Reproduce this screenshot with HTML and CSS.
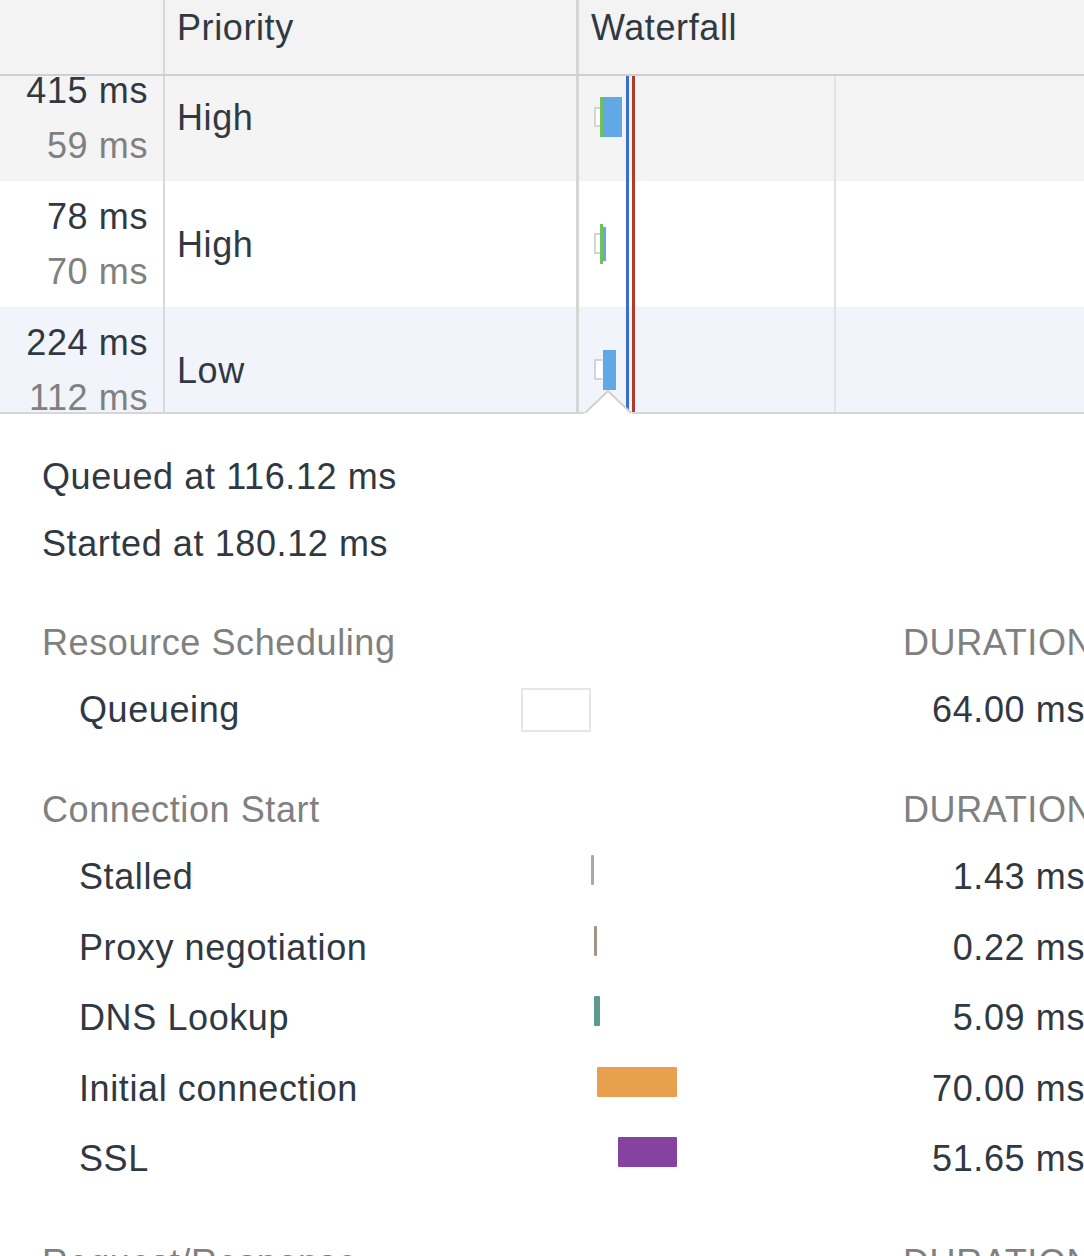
FILE: index.html
```html
<!DOCTYPE html>
<html>
<head>
<meta charset="utf-8">
<title>Network timing</title>
<link rel="stylesheet" href="styles.css">
</head>
<body>
<div class="page">
  <div class="head">
    <div class="col1"></div>
    <div class="col2">Priority</div>
    <div class="col3">Waterfall</div>
  </div>
  <div class="body">
    <div class="rows">
      <div class="row alt">
        <div class="col1"><span>415 ms</span><span class="sub">59 ms</span></div>
        <div class="col2">High</div>
        <div class="col3">
          <span class="wb wait" style="top:53px;height:20px"></span>
          <span class="wb green" style="top:43px;height:40px"></span>
          <span class="wb blue" style="top:43px;height:40px;width:19px"></span>
        </div>
      </div>
      <div class="row">
        <div class="col1"><span>78 ms</span><span class="sub">70 ms</span></div>
        <div class="col2">High</div>
        <div class="col3">
          <span class="wb wait" style="top:52px;height:21px"></span>
          <span class="wb green" style="top:43px;height:40px"></span>
          <span class="wb blue" style="top:46px;height:34px;width:3px"></span>
        </div>
      </div>
      <div class="row sel">
        <div class="col1"><span>224 ms</span><span class="sub">112 ms</span></div>
        <div class="col2">Low</div>
        <div class="col3">
          <span class="wb wait" style="top:52px;height:21px"></span>
          <span class="wb blue" style="top:43px;height:40px;width:13px"></span>
        </div>
      </div>
    </div>
    <span class="vline grid"></span>
    <span class="vline dcl"></span>
    <span class="vline load"></span>
  </div>
  <svg class="pointer" width="48" height="26" viewBox="0 0 48 26">
    <polygon points="0,26 0,24 24,2 48,24 48,26" fill="#ffffff"/>
    <path d="M1 24 L24 2 L47 24" fill="none" stroke="#d2d2d2" stroke-width="2"/>
  </svg>

  <div class="pane">
    <div class="info">Queued at 116.12 ms</div>
    <div class="info">Started at 180.12 ms</div>

    <div class="section">
      <div class="trow shead"><div class="stitle">Resource Scheduling</div><div class="sdur">DURATION</div></div>
      <div class="trow qrow">
        <div class="label">Queueing</div>
        <div class="track"><span class="qbox"></span></div>
        <div class="dur">64.00 ms</div>
      </div>
    </div>

    <div class="section">
      <div class="trow shead"><div class="stitle">Connection Start</div><div class="sdur">DURATION</div></div>
      <div class="trow brow">
        <div class="label">Stalled</div>
        <div class="track"><span class="bar stalled" style="margin-left:70px;width:3px"></span></div>
        <div class="dur">1.43 ms</div>
      </div>
      <div class="trow brow">
        <div class="label">Proxy negotiation</div>
        <div class="track"><span class="bar proxy" style="margin-left:73px;width:3px"></span></div>
        <div class="dur">0.22 ms</div>
      </div>
      <div class="trow brow">
        <div class="label">DNS Lookup</div>
        <div class="track"><span class="bar dns" style="margin-left:73px;width:6px"></span></div>
        <div class="dur">5.09 ms</div>
      </div>
      <div class="trow brow">
        <div class="label">Initial connection</div>
        <div class="track"><span class="bar conn" style="margin-left:76px;width:80px"></span></div>
        <div class="dur">70.00 ms</div>
      </div>
      <div class="trow brow">
        <div class="label">SSL</div>
        <div class="track"><span class="bar ssl" style="margin-left:97px;width:59px"></span></div>
        <div class="dur">51.65 ms</div>
      </div>
    </div>

    <div class="section">
      <div class="trow shead"><div class="stitle">Request/Response</div><div class="sdur">DURATION</div></div>
      <div class="trow brow">
        <div class="label">Request sent</div>
        <div class="track"></div>
        <div class="dur">0.31 ms</div>
      </div>
    </div>
  </div>
</div>
</body>
</html>
```

FILE: styles.css
```css
* { box-sizing: border-box; }

html, body {
  margin: 0;
  padding: 0;
  overflow: hidden;
  background: #ffffff;
}

body {
  font-family: "Liberation Sans", Arial, Helvetica, sans-serif;
  font-size: 36px;
  letter-spacing: 0.6px;
  color: #303942;
}

.page {
  position: relative;
  width: 1096px;
}

/* ---------- header ---------- */
.head {
  display: flex;
  height: 76px;
  background: #f3f3f3;
  border-bottom: 2px solid #d0d0d0;
}

.col1 { flex: none; width: 165px; border-right: 2px solid #d8d8d8; }
.col2 { flex: none; width: 414px; border-right: 3px solid #d6d6d6; }
.col3 { flex: 1; }

.head .col2, .head .col3 {
  padding-top: 7px;
  line-height: 41px;
}
.head .col2 { padding-left: 12px; }
.head .col3 { padding-left: 12px; }

/* ---------- rows ---------- */
.body {
  position: relative;
  height: 336px;
  overflow: hidden;
}

.rows { margin-top: -22px; }

.row {
  display: flex;
  height: 126px;
  background: #ffffff;
}
.row.alt { background: #f4f4f4; height: 127px; }
.row.sel { background: #f1f4fa; }

.row .col1 {
  display: flex;
  flex-direction: column;
  justify-content: center;
  align-items: flex-end;
  padding-right: 15px;
  line-height: 55px;
}
.row .col1 .sub { color: #808080; }

.row .col2 {
  display: flex;
  align-items: center;
  padding-left: 12px;
  line-height: 55px;
}

.row .col3 { position: relative; }

.wb {
  position: absolute;
  display: block;
}
.wb.wait {
  left: 15px;
  width: 8px;
  border: 2px solid #d4d4d4;
  border-right: none;
  background: #ffffff;
}
.wb.green {
  left: 21px;
  width: 3px;
  background: #6fc25a;
}
.wb.blue {
  left: 24px;
  background: #62a7e6;
}

.vline {
  position: absolute;
  top: 0;
  bottom: 0;
  display: block;
}
.vline.grid { left: 834px; width: 2px; background: #e2e2e2; }
.vline.dcl  { left: 626px; width: 3px; background: #3b6ecf; }
.vline.load { left: 632px; width: 3px; background: #b33a2f; }

.pointer {
  position: absolute;
  left: 584px;
  top: 389px;
  display: block;
}

/* ---------- detail pane ---------- */
.pane {
  border-top: 2px solid #d6d6d6;
  padding-top: 29px;
}

.info {
  padding-left: 42px;
  line-height: 67px;
  height: 67px;
}

.section { margin-top: 32px; }
.section + .section { margin-top: 33px; }

.trow {
  display: grid;
  grid-template-columns: 479px 382px 1fr;
  padding-left: 42px;
}

.shead { height: 67px; line-height: 67px; color: #808080; }
.stitle { grid-column: 1 / 3; }
.sdur { white-space: nowrap; }

.label {
  padding-left: 37px;
  line-height: 67px;
  white-space: nowrap;
}
.dur {
  text-align: right;
  padding-right: 11px;
  line-height: 67px;
  white-space: nowrap;
}

.qrow { height: 67px; }
.qrow .track { display: flex; align-items: center; }
.qbox {
  display: block;
  width: 70px;
  height: 44px;
  border: 2px solid #e6e6e6;
  background: #ffffff;
}

.brow { height: 70.5px; }
.brow .track { display: flex; align-items: flex-start; }

.bar {
  display: block;
  height: 30px;
  margin-top: 12px;
  border-radius: 1px;
}
.bar.stalled { background: #a8a8a8; }
.bar.proxy   { background: #a89487; }
.bar.dns     { background: #5c9a90; }
.bar.conn    { background: #e8a04e; }
.bar.ssl     { background: #8642a0; }
```
